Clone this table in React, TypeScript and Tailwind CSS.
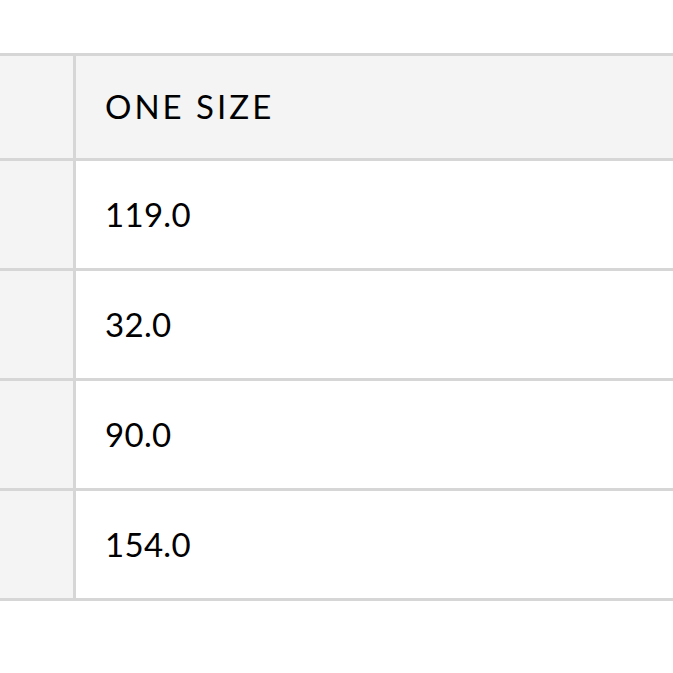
const rows = ["119.0", "32.0", "90.0", "154.0"];

export default function App() {
  return (
    <div className="min-h-screen w-[673px] overflow-hidden bg-white pt-[53px] font-['Lato',sans-serif] text-black">
      <div className="w-[700px] border-t-[3px] border-[#d6d6d6]">
        <div className="flex h-[105px] border-b-[3px] border-[#d6d6d6] bg-[#f4f4f4]">
          <div className="w-[76px] shrink-0 border-r-[3px] border-[#d6d6d6]"></div>
          <div className="flex items-center pl-[29px] text-[33px] tracking-[3px]">ONE SIZE</div>
        </div>
        {rows.map((value) => (
          <div key={value} className="flex h-[110px] border-b-[3px] border-[#d6d6d6]">
            <div className="w-[76px] shrink-0 border-r-[3px] border-[#d6d6d6] bg-[#f4f4f4]"></div>
            <div className="flex items-center pl-[29px] text-[33px] tracking-[0.3px]">{value}</div>
          </div>
        ))}
      </div>
    </div>
  );
}
